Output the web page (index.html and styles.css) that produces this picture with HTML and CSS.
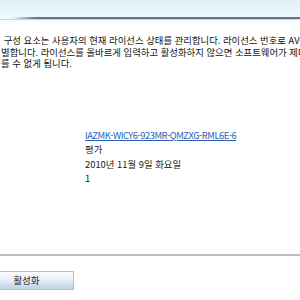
FILE: index.html
```html
<!DOCTYPE html>
<html lang="ko">
<head>
<meta charset="utf-8">
<link rel="stylesheet" href="styles.css">
</head>
<body>
<div class="page">
  <div class="header"><div class="rule"></div></div>
  <div class="desc">
    <p>&nbsp;구성 요소는 사용자의 현재 라이선스 상태를 관리합니다. 라이선스 번호로 AVG</p>
    <p>별합니다. 라이선스를 올바르게 입력하고 활성화하지 않으면 소프트웨어가 제대</p>
    <p>를 수 없게 됩니다.</p>
  </div>
  <div class="info">
    <a class="key" href="#">IAZMK-WICY6-923MR-QMZXG-RML6E-6</a>
    <div class="row">평가</div>
    <div class="row">2010년 11월 9일 화요일</div>
    <div class="row">1</div>
  </div>
  <div class="footer">
    <div class="sep"></div>
    <button class="btn">활성화</button>
  </div>
</div>
</body>
</html>
```
FILE: styles.css
```css
html, body {
  margin: 0;
  padding: 0;
  background: #fff;
  width: 300px;
  height: 300px;
  overflow: hidden;
}
.page {
  font-family: "Noto Sans CJK KR", "Noto Sans", sans-serif;
  font-size: 9.4px;
  color: #111;
  width: 300px;
  height: 300px;
  display: flex;
  flex-direction: column;
  overflow: hidden;
}
.header {
  height: 30px;
  background: linear-gradient(to bottom, #dff0f8 0%, #eef7fb 55%, #fbfdfe 75%, #ffffff 100%);
  display: flex;
  flex-direction: column;
}
.rule {
  margin-top: 17px;
  height: 2px;
  background: linear-gradient(to right, rgba(110,115,128,0) 12px, #6e7380 36px, #6e7380 100%);
  border-bottom: 1px solid #cfd4da;
}
.desc {
  padding-top: 5px;
  padding-left: 1px;
  overflow: hidden;
  font-size: 9.4px;
}
.desc p {
  margin: 0;
  white-space: nowrap;
  line-height: 11.7px;
  height: 11.7px;
}
.info {
  margin-top: 58px;
  padding-left: 85px;
  display: flex;
  flex-direction: column;
}
.key {
  color: #2a5fb8;
  text-decoration: underline;
  line-height: 14px;
  height: 14px;
  letter-spacing: -0.5px;
}
.row {
  line-height: 14.5px;
  height: 14.5px;
  color: #222;
}
.footer {
  margin-top: auto;
  padding-bottom: 10px;
  display: flex;
  flex-direction: column;
}
.sep {
  height: 2px;
  background: #b9bcc1;
  margin-bottom: 15px;
}
.btn {
  width: 95px;
  height: 19px;
  margin-left: -21px;
  border: 1px solid #b5c1d3;
  border-radius: 0;
  background: linear-gradient(to bottom, #fbfcfe 0%, #e6edf7 50%, #bfd0e8 100%);
  font-family: "Noto Sans CJK KR", "Noto Sans", sans-serif;
  font-size: 9.5px;
  color: #222;
  padding: 0;
  line-height: 17px;
}
```
